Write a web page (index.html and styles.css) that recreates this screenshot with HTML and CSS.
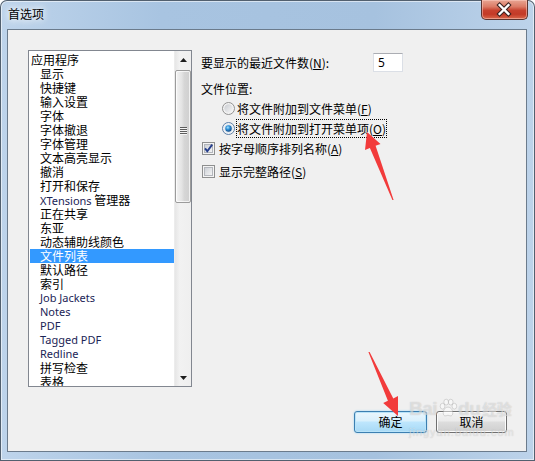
FILE: index.html
```html
<!DOCTYPE html>
<html lang="zh-CN">
<head>
<meta charset="utf-8">
<title>首选项</title>
<link rel="stylesheet" href="styles.css">
</head>
<body>
<svg class="defs" width="0" height="0" aria-hidden="true">
  <defs>
    <linearGradient id="cbg" x1="0" y1="0" x2="1" y2="1">
      <stop offset="0" stop-color="#cbcfd5"/>
      <stop offset="1" stop-color="#f6f6f6"/>
    </linearGradient>
    <linearGradient id="rg" x1="0" y1="0" x2="1" y2="1">
      <stop offset="0" stop-color="#c9ccd1"/>
      <stop offset="1" stop-color="#f7f7f7"/>
    </linearGradient>
    <radialGradient id="dot" cx="0.4" cy="0.35" r="0.7">
      <stop offset="0" stop-color="#a6e4ff"/>
      <stop offset="0.45" stop-color="#2c8fd6"/>
      <stop offset="1" stop-color="#0f3f7a"/>
    </radialGradient>
  </defs>
</svg>
<div class="window">
  <div class="titlebar">
    <span class="title">首选项</span>
    <div class="close">
      <svg width="47" height="20" viewBox="0 0 47 20">
        <path d="M19 5 L28 14 M28 5 L19 14" stroke="#3b2220" stroke-width="4.6" stroke-linecap="square" fill="none"/>
        <path d="M19 5 L28 14 M28 5 L19 14" stroke="#ffffff" stroke-width="2.4" stroke-linecap="square" fill="none"/>
      </svg>
    </div>
  </div>
  <div class="frame">
    <div class="client">
      <div class="content">
        <div class="listbox">
          <ul class="items">
            <li class="item top">应用程序</li>
            <li class="item">显示</li>
            <li class="item">快捷键</li>
            <li class="item">输入设置</li>
            <li class="item">字体</li>
            <li class="item">字体撤退</li>
            <li class="item">字体管理</li>
            <li class="item">文本高亮显示</li>
            <li class="item">撤消</li>
            <li class="item">打开和保存</li>
            <li class="item"><span class="latin">XTensions</span> 管理器</li>
            <li class="item">正在共享</li>
            <li class="item">东亚</li>
            <li class="item">动态辅助线颜色</li>
            <li class="item sel">文件列表</li>
            <li class="item">默认路径</li>
            <li class="item">索引</li>
            <li class="item latin">Job Jackets</li>
            <li class="item latin">Notes</li>
            <li class="item latin">PDF</li>
            <li class="item latin">Tagged PDF</li>
            <li class="item latin">Redline</li>
            <li class="item">拼写检查</li>
            <li class="item">表格</li>
          </ul>
          <div class="scrollbar">
            <div class="sb-btn">
              <svg width="7" height="4" viewBox="0 0 7 4"><path d="M0 4 L3.5 0 L7 4 Z" fill="#1e1e1e"/></svg>
            </div>
            <div class="sb-track">
              <div class="sb-thumb">
                <div class="grip"><i></i><i></i><i></i><i></i></div>
              </div>
            </div>
            <div class="sb-btn">
              <svg width="7" height="4" viewBox="0 0 7 4"><path d="M0 0 L3.5 4 L7 0 Z" fill="#1e1e1e"/></svg>
            </div>
          </div>
        </div>
        <div class="options">
          <div class="row count-row">
            <span class="label">要显示的最近文件数(<u>N</u>):</span>
            <div class="textbox">5</div>
          </div>
          <div class="row group-label">文件位置:</div>
          <div class="row radio-row">
            <svg class="radio" width="13" height="13" viewBox="0 0 13 13">
              <circle cx="6.5" cy="6.5" r="6" fill="#f3f3f3" stroke="#929292"/>
              <circle cx="6.5" cy="6.5" r="4.2" fill="url(#rg)"/>
            </svg>
            <span class="opt">将文件附加到文件菜单(<u>F</u>)</span>
          </div>
          <div class="row radio-row">
            <svg class="radio" width="13" height="13" viewBox="0 0 13 13">
              <circle cx="6.5" cy="6.5" r="6" fill="#f3f3f3" stroke="#5d7fa8"/>
              <circle cx="6.5" cy="6.5" r="4.2" fill="#d6e6f4"/>
              <circle cx="6.5" cy="6.5" r="3.2" fill="url(#dot)"/>
            </svg>
            <span class="opt focus">将文件附加到打开菜单项(<u>O</u>)</span>
          </div>
          <div class="row check-row">
            <svg class="check" width="13" height="13" viewBox="0 0 13 13">
              <rect x="0.5" y="0.5" width="12" height="12" fill="#f4f4f4" stroke="#8e8f8f"/>
              <rect x="2.5" y="2.5" width="8" height="8" fill="url(#cbg)" stroke="#b3b6bc"/>
              <path d="M3 6.3 L5.3 9.2 L10.2 2.6" fill="none" stroke="#263f8c" stroke-width="1.9"/>
            </svg>
            <span class="opt">按字母顺序排列名称(<u>A</u>)</span>
          </div>
          <div class="row check-row last">
            <svg class="check" width="13" height="13" viewBox="0 0 13 13">
              <rect x="0.5" y="0.5" width="12" height="12" fill="#f4f4f4" stroke="#8e8f8f"/>
              <rect x="2.5" y="2.5" width="8" height="8" fill="url(#cbg)" stroke="#b3b6bc"/>
            </svg>
            <span class="opt">显示完整路径(<u>S</u>)</span>
          </div>
        </div>
      </div>
      <div class="buttons">
        <button class="btn default">确定</button>
        <button class="btn cancel">取消</button>
      </div>
    </div>
  </div>

  <svg class="arrows" width="535" height="461" viewBox="0 0 535 461">
    <polygon fill="#f23b3b" points="367,132 380.5,144 375.6,145.8 393.6,200 392.4,200 369.9,148 365,150"/>
    <polygon fill="#f23b3b" points="398,416 383.2,403 387.9,400.8 368.4,352 369.6,352 393.3,398.4 398,396"/>
  </svg>

  <div class="watermark">
    <div class="wm-main">
      <span>Bai</span>
      <svg class="paw" width="20" height="20" viewBox="0 0 22 22">
        <g fill="rgba(255,255,255,0.45)" stroke="rgba(140,140,140,0.35)" stroke-width="1">
          <ellipse cx="5" cy="9" rx="2.6" ry="3.2"/>
          <ellipse cx="9" cy="4.5" rx="2.6" ry="3.2"/>
          <ellipse cx="14" cy="4.5" rx="2.6" ry="3.2"/>
          <ellipse cx="18" cy="9" rx="2.6" ry="3.2"/>
          <path d="M11 10 C7 10 5 15 6 18 C7 21 10 19 11 19 C12 19 15 21 16 18 C17 15 15 10 11 10 Z"/>
        </g>
      </svg>
      <span>du</span>
      <span class="wm-cn">经验</span>
    </div>
    <div class="wm-url">jingyan.baidu.com</div>
  </div>
</div>
</body>
</html>
```

FILE: styles.css
```css
* {
  box-sizing: border-box;
}

html, body {
  margin: 0;
  padding: 0;
  background: #ffffff;
}

body {
  font-family: "Noto Sans CJK SC", "Noto Sans", sans-serif;
  font-size: 12px;
  color: #000;
}

.defs {
  position: absolute;
  width: 0;
  height: 0;
}

.window {
  position: relative;
  width: 535px;
  height: 461px;
  background: linear-gradient(to right, #bed4eb 0%, #a8c4e1 30%, #a6c2df 70%, #bdd3ea 100%);
  border-radius: 7px 7px 0 0;
  box-shadow: inset 0 0 0 1px #52606f, inset 0 0 0 2px rgba(255, 255, 255, 0.55);
  overflow: hidden;
}

.titlebar {
  height: 29px;
  display: flex;
  align-items: flex-start;
}

.title {
  padding: 5px 0 0 8px;
  line-height: 17px;
  font-size: 12px;
  color: #000;
  text-shadow: 0 0 6px #ffffff, 0 0 10px #ffffff;
}

.close {
  margin-left: auto;
  margin-right: 7px;
  width: 47px;
  height: 20px;
  border: 1px solid #5b3430;
  border-top: none;
  border-radius: 0 0 5px 5px;
  background: linear-gradient(to bottom, #e8a593 0%, #dc7b66 35%, #c7412e 55%, #c33a27 75%, #d9684b 100%);
  box-shadow: inset 0 0 0 1px rgba(255, 210, 200, 0.5);
  display: flex;
  align-items: center;
  justify-content: center;
}

.close svg {
  display: block;
  margin-left: -1px;
}

.frame {
  padding: 0 8px 0 7px;
}

.client {
  width: 520px;
  height: 423px;
  border: 1px solid #6b7b8c;
  background: #f0f0f0;
  padding: 20px 19px 18px 20px;
  display: flex;
  flex-direction: column;
}

.content {
  display: flex;
  align-items: flex-start;
}

/* ---------- list box ---------- */
.listbox {
  width: 164px;
  height: 337px;
  border: 1px solid #828790;
  background: #ffffff;
  display: flex;
  overflow: hidden;
}

.items {
  list-style: none;
  margin: 0;
  padding: 2px 0 0 1px;
  width: 145px;
  flex: none;
}

.item {
  height: 14px;
  line-height: 14px;
  padding-left: 10px;
  white-space: nowrap;
  font-size: 12px;
}

.item.top {
  padding-left: 1px;
}

.item.sel {
  background: #3399ff;
  color: #ffffff;
}

.latin {
  font-family: "Noto Sans", "Liberation Sans", sans-serif;
  font-size: 11px;
  color: #1b2456;
}

/* ---------- scrollbar ---------- */
.scrollbar {
  width: 17px;
  flex: none;
  display: flex;
  flex-direction: column;
  background: linear-gradient(to right, #e6e6e6, #f2f2f2 30%, #efefef);
  border-left: 1px solid #ececec;
}

.sb-btn {
  height: 17px;
  flex: none;
  display: flex;
  align-items: center;
  justify-content: center;
}

.sb-btn svg {
  display: block;
}

.sb-track {
  flex: 1;
  padding-top: 2px;
}

.sb-thumb {
  width: 16px;
  height: 133px;
  border: 1px solid #9b9b9b;
  border-radius: 2px;
  background: linear-gradient(to right, #f3f3f3 0%, #e4e4e4 40%, #d6d6d6 60%, #cfcfcf 100%);
  box-shadow: inset 0 0 0 1px rgba(255, 255, 255, 0.7);
  display: flex;
  align-items: center;
  justify-content: center;
}

.grip {
  display: flex;
  flex-direction: column;
  gap: 1px;
  margin-bottom: 12px;
}

.grip i {
  display: block;
  width: 7px;
  height: 1px;
  background: #5d5d5d;
  box-shadow: 0 1px 0 #f4f4f4;
}

/* ---------- options ---------- */
.options {
  margin-left: 9px;
  padding-top: 3px;
  display: flex;
  flex-direction: column;
}

.row {
  display: flex;
  align-items: center;
  white-space: nowrap;
  line-height: 14px;
}

.count-row {
  height: 19px;
}

.count-row .label {
  width: 172px;
}

.textbox {
  width: 30px;
  height: 19px;
  background: #ffffff;
  border: 1px solid #dbdfe6;
  border-top-color: #abadb3;
  padding-left: 4px;
  line-height: 17px;
  font-family: "Noto Sans", "Liberation Sans", sans-serif;
  font-size: 12px;
}

.group-label {
  height: 18px;
  margin-top: 8px;
}

.radio-row {
  height: 20px;
  padding-left: 21px;
}

.check-row {
  height: 20px;
  padding-left: 1px;
}

.check-row.last {
  margin-top: 3px;
}

.radio, .check {
  display: block;
  flex: none;
}

.radio + .opt {
  margin-left: 1px;
}

.check + .opt {
  margin-left: 3px;
}

.opt {
  border: 1px dotted transparent;
  padding: 1px 0;
  line-height: 15px;
}

.opt.focus {
  border-color: #000;
}

u {
  text-decoration: underline;
  text-underline-offset: 1px;
}

/* ---------- buttons ---------- */
.buttons {
  margin-top: auto;
  display: flex;
  justify-content: flex-end;
  gap: 9px;
}

.btn {
  height: 22px;
  font-family: "Noto Sans CJK SC", sans-serif;
  font-size: 12px;
  color: #000;
  border-radius: 3px;
  padding: 0;
  line-height: 18px;
}

.btn.default {
  width: 73px;
  border: 1px solid #3c7fb1;
  background: linear-gradient(to bottom, #eaf6fd 0%, #d9f0fc 45%, #bee6fd 50%, #a7d9f5 100%);
  box-shadow: inset 0 0 0 1px #b9e3f8, 0 0 2px #8ed2f5;
}

.btn.cancel {
  width: 71px;
  border: 1px solid #707070;
  background: linear-gradient(to bottom, #f2f2f2 0%, #ebebeb 45%, #dddddd 50%, #cfcfcf 100%);
  box-shadow: inset 0 0 0 1px #fcfcfc;
}

/* ---------- overlays ---------- */
.arrows {
  position: absolute;
  left: 0;
  top: 0;
  pointer-events: none;
}

.watermark {
  position: absolute;
  left: 409px;
  top: 398px;
  pointer-events: none;
  color: rgba(255, 255, 255, 0.45);
  text-shadow: 0 0 1px rgba(120, 120, 120, 0.4);
}

.wm-main {
  display: flex;
  align-items: flex-end;
  font-family: "Liberation Sans", sans-serif;
  font-weight: bold;
  font-size: 19px;
  line-height: 22px;
  letter-spacing: -0.5px;
}

.paw {
  display: block;
  margin: 0 0 2px 1px;
}

.wm-cn {
  font-family: "Noto Sans CJK SC", sans-serif;
  font-size: 15px;
  margin-left: 2px;
}

.wm-url {
  font-family: "Liberation Sans", sans-serif;
  font-size: 11px;
  letter-spacing: 1px;
  margin-top: 6px;
  margin-left: 0;
}
```
